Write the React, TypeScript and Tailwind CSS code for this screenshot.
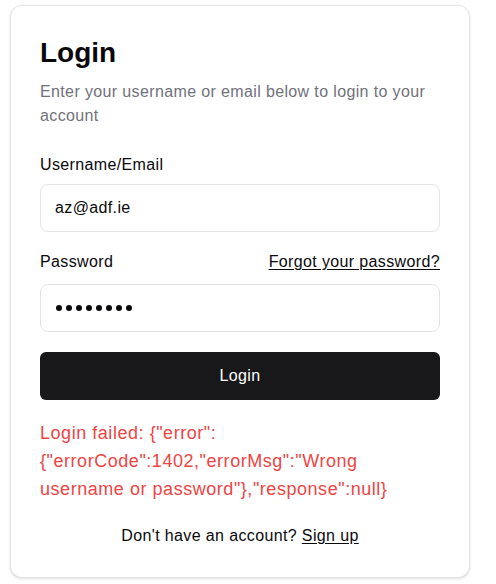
import React from "react";

const App = () => {
  return (
    <div className="min-h-screen bg-white pt-[5px] pl-[10px] font-['Liberation_Sans',Arial,sans-serif]">
      <div className="w-[460px] rounded-xl border border-[#e4e4e7] bg-white p-[29px] tracking-[0.023em] shadow-sm">
        <h1 className="text-[28px] leading-9 font-bold tracking-normal text-[#09090b]">Login</h1>
        <p className="mt-[9px] text-base leading-6 text-[#71717a]">
          Enter your username or email below to login to your account
        </p>

        <label className="mt-[25px] block text-base leading-6 text-[#09090b]">Username/Email</label>
        <input
          type="text"
          defaultValue="az@adf.ie"
          className="mt-[7px] h-12 w-full rounded-lg border border-[#e4e4e7] px-[14px] text-base tracking-[0.023em] text-[#09090b] outline-none"
        />

        <div className="mt-[18px] flex items-center justify-between">
          <label className="text-base leading-6 text-[#09090b]">Password</label>
          <a href="#" className="text-base leading-6 text-[#09090b] underline underline-offset-2">
            Forgot your password?
          </a>
        </div>
        <div className="mt-[10px] flex h-12 w-full items-center gap-[4px] rounded-lg border border-[#e4e4e7] px-[15px]">
          {Array.from({ length: 8 }).map((_, i) => (
            <span key={i} className="h-[6px] w-[6px] rounded-full bg-[#09090b]" />
          ))}
        </div>

        <button className="mt-5 h-12 w-full rounded-md bg-[#18181b] text-base text-white">Login</button>

        <p className="mt-[19px] pr-[4px] text-lg leading-7 tracking-[0.03em] text-[#ef4444]">
          Login failed: {'{"error":{"errorCode":1402,"errorMsg":"Wrong username or password"},"response":null}'}
        </p>

        <p className="mt-[21px] text-center text-base leading-6 text-[#09090b]">
          Don't have an account?{" "}
          <a href="#" className="underline underline-offset-2">
            Sign up
          </a>
        </p>
      </div>
    </div>
  );
};

export default App;
